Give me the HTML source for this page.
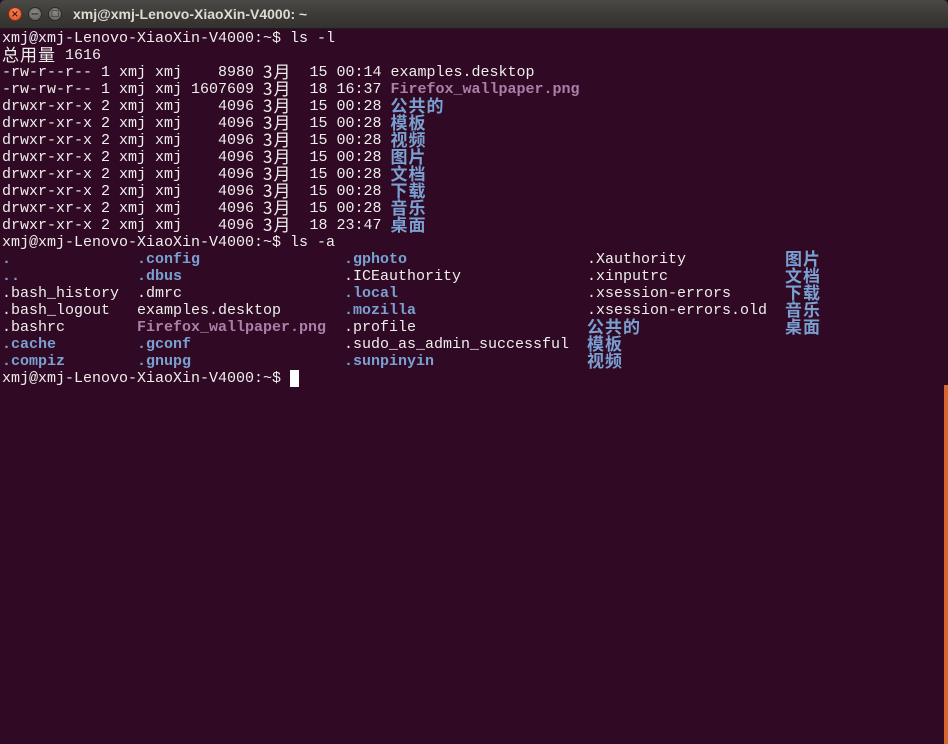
<!DOCTYPE html>
<html><head><meta charset="utf-8"><style>
body{margin:0;width:948px;height:744px;overflow:hidden;background:#300a24;position:relative;font-family:"Liberation Mono","Noto Sans CJK SC",monospace;}
.tb{position:absolute;left:0;top:0;width:948px;height:28px;background:linear-gradient(#4a4945,#3a3935 60%,#33322e);border-bottom:1px solid #1e1d1b;border-radius:5px 5px 0 0}
.btn{position:absolute;top:7px;width:14px;height:14px;border-radius:50%;box-sizing:border-box;font:bold 10px/13px "DejaVu Sans",sans-serif;text-align:center}
.title{position:absolute;left:73px;top:6px;font:bold 14px "Liberation Sans",sans-serif;color:#dfdbd2}
.t{position:absolute;left:2px;top:30px;font-size:15px;line-height:17px;color:#eeeeec}
.l{height:17px;line-height:17px;position:relative;white-space:pre;overflow:visible}
.c{font-family:"Noto Sans CJK SC",sans-serif;letter-spacing:1px;font-size:17px;line-height:17px;display:inline-block;vertical-align:top;height:17px;position:relative;top:-2px}
.a.c{top:-2px}
.b{color:#7aa0d2;font-weight:bold}
.m{color:#ad7fa8;font-weight:bold}
.a{position:absolute;top:0}
.cur{display:inline-block;width:9px;height:17px;background:#fff;vertical-align:top}
.or{position:absolute;left:944px;top:385px;width:4px;height:359px;background:#d9652f}
</style></head><body>
<div class="tb">
<div class="btn" style="left:8px;background:radial-gradient(circle at 50% 35%,#f58a5f,#e0521f);border:1px solid #8a2e10;color:#4a1a08">×</div>
<div class="btn" style="left:28px;background:radial-gradient(circle at 50% 35%,#8a8984,#5f5e5a);border:1px solid #2a2927;color:#2c2b28">−</div>
<div class="btn" style="left:48px;background:radial-gradient(circle at 50% 35%,#8a8984,#5f5e5a);border:1px solid #2a2927;color:#2c2b28;font-size:9px">□</div>
<div class="title">xmj@xmj-Lenovo-XiaoXin-V4000: ~</div>
</div>
<div class="t"><div class="l">xmj@xmj-Lenovo-XiaoXin-V4000:~$ ls -l</div><div class="l"><span class="c">总用量</span> 1616</div><div class="l">-rw-r--r-- 1 xmj xmj    8980 <span class="c">3月</span>  15 00:14 examples.desktop</div><div class="l">-rw-rw-r-- 1 xmj xmj 1607609 <span class="c">3月</span>  18 16:37 <span class="m">Firefox_wallpaper.png</span></div><div class="l">drwxr-xr-x 2 xmj xmj    4096 <span class="c">3月</span>  15 00:28 <span class="b c">公共的</span></div><div class="l">drwxr-xr-x 2 xmj xmj    4096 <span class="c">3月</span>  15 00:28 <span class="b c">模板</span></div><div class="l">drwxr-xr-x 2 xmj xmj    4096 <span class="c">3月</span>  15 00:28 <span class="b c">视频</span></div><div class="l">drwxr-xr-x 2 xmj xmj    4096 <span class="c">3月</span>  15 00:28 <span class="b c">图片</span></div><div class="l">drwxr-xr-x 2 xmj xmj    4096 <span class="c">3月</span>  15 00:28 <span class="b c">文档</span></div><div class="l">drwxr-xr-x 2 xmj xmj    4096 <span class="c">3月</span>  15 00:28 <span class="b c">下载</span></div><div class="l">drwxr-xr-x 2 xmj xmj    4096 <span class="c">3月</span>  15 00:28 <span class="b c">音乐</span></div><div class="l">drwxr-xr-x 2 xmj xmj    4096 <span class="c">3月</span>  18 23:47 <span class="b c">桌面</span></div><div class="l">xmj@xmj-Lenovo-XiaoXin-V4000:~$ ls -a</div><div class="l"><span class="b">.</span><span class="a b" style="left:135px">.config</span><span class="a b" style="left:342px">.gphoto</span><span class="a" style="left:585px">.Xauthority</span><span class="a b c" style="left:783px">图片</span></div><div class="l"><span class="b">..</span><span class="a b" style="left:135px">.dbus</span><span class="a" style="left:342px">.ICEauthority</span><span class="a" style="left:585px">.xinputrc</span><span class="a b c" style="left:783px">文档</span></div><div class="l">.bash_history<span class="a" style="left:135px">.dmrc</span><span class="a b" style="left:342px">.local</span><span class="a" style="left:585px">.xsession-errors</span><span class="a b c" style="left:783px">下载</span></div><div class="l">.bash_logout<span class="a" style="left:135px">examples.desktop</span><span class="a b" style="left:342px">.mozilla</span><span class="a" style="left:585px">.xsession-errors.old</span><span class="a b c" style="left:783px">音乐</span></div><div class="l">.bashrc<span class="a m" style="left:135px">Firefox_wallpaper.png</span><span class="a" style="left:342px">.profile</span><span class="a b c" style="left:585px">公共的</span><span class="a b c" style="left:783px">桌面</span></div><div class="l"><span class="b">.cache</span><span class="a b" style="left:135px">.gconf</span><span class="a" style="left:342px">.sudo_as_admin_successful</span><span class="a b c" style="left:585px">模板</span></div><div class="l"><span class="b">.compiz</span><span class="a b" style="left:135px">.gnupg</span><span class="a b" style="left:342px">.sunpinyin</span><span class="a b c" style="left:585px">视频</span></div><div class="l">xmj@xmj-Lenovo-XiaoXin-V4000:~$ <span class="cur"></span></div></div>
<div class="or"></div>
</body></html>
